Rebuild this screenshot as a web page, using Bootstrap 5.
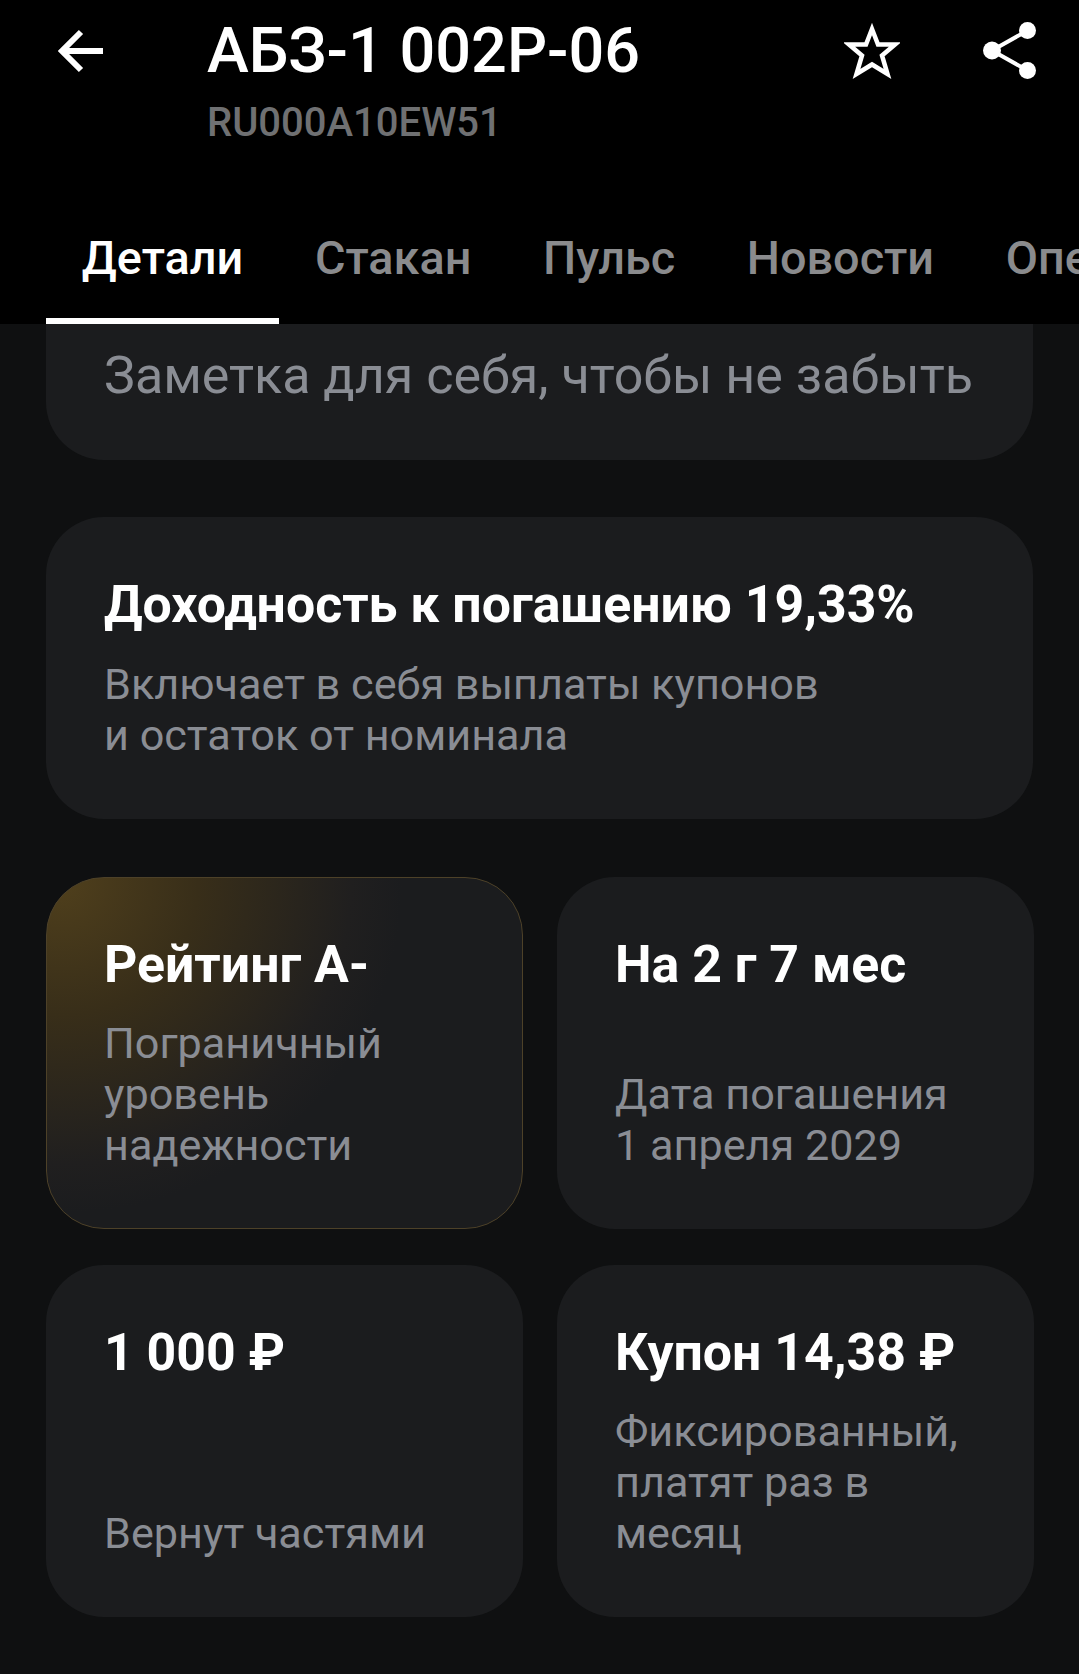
<!DOCTYPE html><html lang="ru">
<head>
  <meta charset="UTF-8">
  <meta name="viewport" content="width=device-width, initial-scale=1.0">
  <title>АБЗ-1 002Р-06</title>
  <link href="https://cdn.jsdelivr.net/npm/bootstrap@5.3.0/dist/css/bootstrap.min.css" rel="stylesheet">
  <style>
    html, body { height: 100%; }
    body { background-color: #0f1011; font-family: Roboto, "Liberation Sans", sans-serif; overflow: hidden; }
    .top-head { background-color: #000; height: 324px; overflow: hidden; }
    .head-row { height: 225px; padding: 18px 43px 0 56px; }
    .back-icon { width: 50px; height: 50px; margin-top: 8px; }
    .head-title { margin-left: 101px; }
    .bond-name { color: #fff; font-size: 63px; font-weight: 500; line-height: 66px; }
    .bond-isin { color: #6f7072; font-size: 40px; font-weight: 500; line-height: 44px; margin-top: 17px; }
    .star-icon { margin-top: 5px; }
    .share-icon { margin-top: 4px; margin-left: 83px; }
    .tab-row { height: 99px; padding-left: 46px; white-space: nowrap; }
    .tab-item { color: #8a8b8d; font-size: 46.8px; font-weight: 500; line-height: 50px; padding: 8px 35.8px 0; height: 99px; text-decoration: none; }
    .tab-item.is-active { color: #fff; border-bottom: 6px solid #fff; }
    .content-area { height: 1350px; overflow: hidden; padding: 0 46px; }
    .info-box { background-color: #1b1c1e; border-radius: 58px; padding: 58px; }
    .note-box { margin-top: -60px; height: 196px; padding-top: 82px; color: #8a8d94; font-size: 52px; line-height: 60px; white-space: nowrap; }
    .yield-box { margin-top: 57px; height: 302px; }
    .box-title { color: #fff; font-size: 51.8px; font-weight: 700; line-height: 60px; white-space: nowrap; }
    .box-text { color: #8a8d94; font-size: 43.2px; line-height: 51px; }
    .yield-box .box-text { margin-top: 24px; }
    .tile-grid { display: grid; grid-template-columns: 477px 477px; column-gap: 34px; row-gap: 36px; margin-top: 58px; }
    .tile { height: 352px; display: flex; flex-direction: column; padding-bottom: 0; }
    .tile .box-text { margin-top: 23px; }
    .tile .push-down { margin-top: auto; margin-bottom: 58px; }
    .gold-tile { border: 1px solid #4d4128; background: radial-gradient(ellipse 340px 330px at 15px 5px, #4f3f1c 0%, #382e19 40%, #201f1f 85%, #1b1c1e 100%); padding: 57px; }
  </style>
</head>
<body>
  <header class="top-head">
    <div class="head-row d-flex align-items-start">
      <svg class="back-icon flex-shrink-0" viewBox="0 0 50 50" fill="none" stroke="#fff" stroke-width="6"><path d="M47 25H6M25 6L6 25L25 44"/></svg>
      <div class="head-title flex-grow-1">
        <div class="bond-name">АБЗ-1 002Р-06</div>
        <div class="bond-isin">RU000A10EW51</div>
      </div>
      <svg class="star-icon flex-shrink-0" width="56" height="56" viewBox="0 0 56 56" fill="none" stroke="#fff" stroke-width="4.5" stroke-linejoin="miter"><path d="M28 6L34 21.5H51L38 32.5L43.5 51L28 41.5L12.5 51L18 32.5L5 21.5H22Z"/></svg>
      <svg class="share-icon flex-shrink-0" width="53" height="57" viewBox="0 0 53 57" fill="#fff"><circle cx="44.5" cy="8.5" r="8.5"/><circle cx="9" cy="28.5" r="9"/><circle cx="44.5" cy="48.5" r="8.5"/><path d="M44.5 8.5L9 28.5L44.5 48.5" fill="none" stroke="#fff" stroke-width="4"/></svg>
    </div>
    <nav class="tab-row d-flex">
      <a class="tab-item is-active" href="#">Детали</a>
      <a class="tab-item" href="#">Стакан</a>
      <a class="tab-item" href="#">Пульс</a>
      <a class="tab-item" href="#">Новости</a>
      <a class="tab-item" href="#">Операции</a>
    </nav>
  </header>
  <main class="content-area">
    <div class="info-box note-box">Заметка для себя, чтобы не забыть</div>
    <div class="info-box yield-box">
      <div class="box-title">Доходность к погашению 19,33%</div>
      <div class="box-text">Включает в себя выплаты купонов<br>и остаток от номинала</div>
    </div>
    <div class="tile-grid">
      <div class="info-box tile gold-tile">
        <div class="box-title">Рейтинг А-</div>
        <div class="box-text">Пограничный<br>уровень<br>надежности</div>
      </div>
      <div class="info-box tile">
        <div class="box-title">На 2 г 7 мес</div>
        <div class="box-text push-down">Дата погашения<br>1 апреля 2029</div>
      </div>
      <div class="info-box tile">
        <div class="box-title">1 000 ₽</div>
        <div class="box-text push-down">Вернут частями</div>
      </div>
      <div class="info-box tile">
        <div class="box-title">Купон 14,38 ₽</div>
        <div class="box-text">Фиксированный,<br>платят раз в<br>месяц</div>
      </div>
    </div>
  </main>
  <script src="https://cdn.jsdelivr.net/npm/bootstrap@5.3.0/dist/js/bootstrap.bundle.min.js"></script>
</body>
</html>
